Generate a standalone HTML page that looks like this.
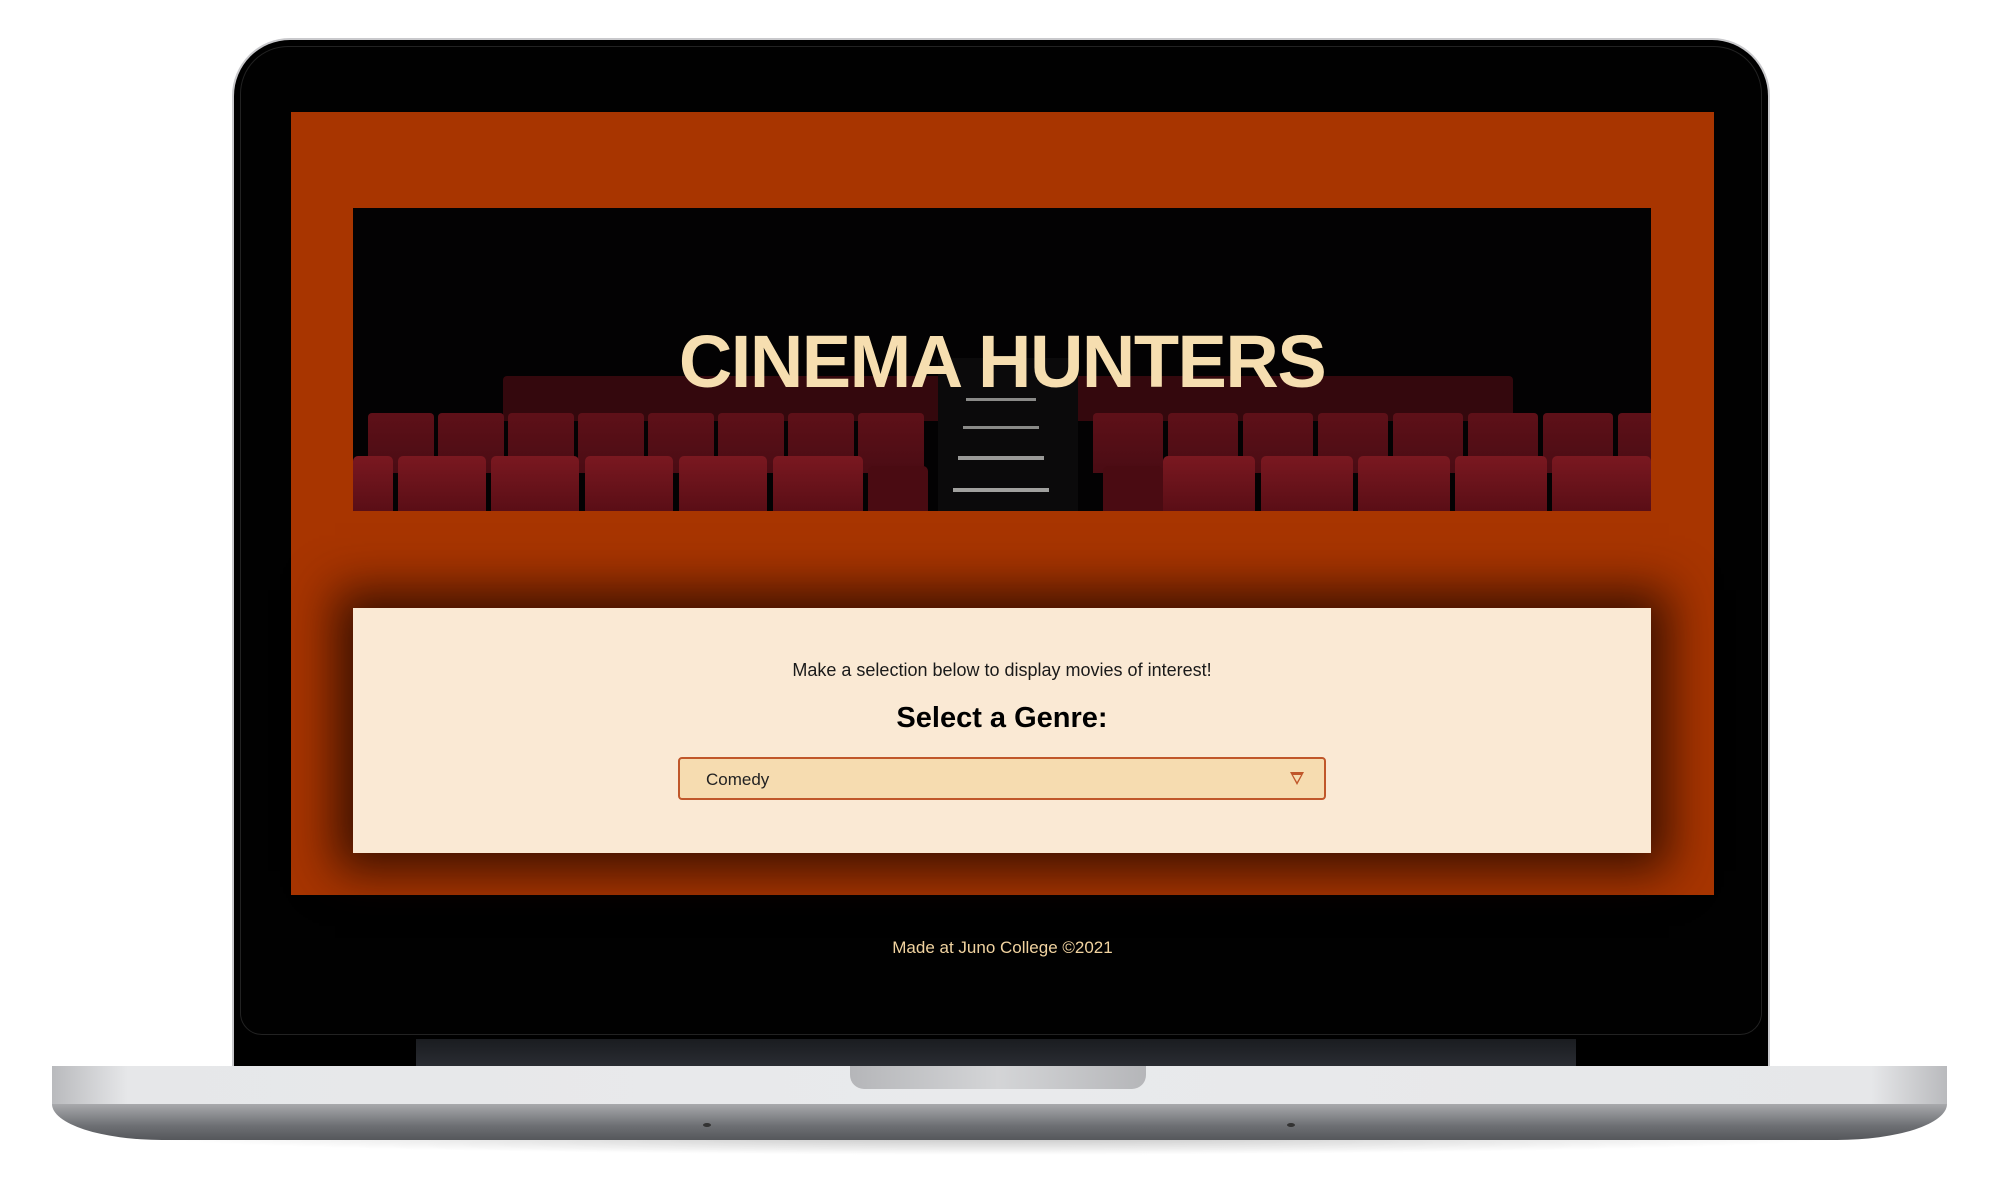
<!DOCTYPE html>
<html><head><meta charset="utf-8"><style>
*{margin:0;padding:0;box-sizing:border-box}
body{width:1999px;height:1181px;background:#fff;position:relative;overflow:hidden;font-family:"Liberation Sans",sans-serif}
.abs{position:absolute}
#lid{left:232px;top:38px;width:1538px;height:1030px;background:#000;border-radius:58px 58px 0 0;border:2px solid #c9c9cc;border-bottom:none}
#inner{left:240px;top:46px;width:1522px;height:989px;background:#010101;border-radius:48px 48px 22px 22px;border:1px solid #222}
#screen{left:291px;top:112px;width:1423px;height:783px;background:#a83500}
#banner{left:353px;top:208px;width:1298px;height:303px;background:#030203;overflow:hidden}
.seat{position:absolute;background:linear-gradient(#7a1820,#5a0e16);border-radius:5px 5px 0 0}
.s2{position:absolute;background:linear-gradient(#5e1018,#4a0c14);border-radius:4px 4px 0 0}
#title{left:353px;top:320px;width:1298px;text-align:center;font-weight:bold;font-size:74px;color:#f6deb0;letter-spacing:-1.5px;line-height:84px}
#card{left:353px;top:608px;width:1298px;height:245px;background:#fae9d4;box-shadow:0 0 45px 18px rgba(40,10,0,.85)}
#t1{left:353px;top:660px;width:1298px;text-align:center;font-size:18px;color:#1a1a1a}
#t2{left:353px;top:702px;width:1298px;text-align:center;font-size:29px;font-weight:bold;color:#000}
#sel{left:678px;top:757px;width:648px;height:43px;background:#f6dcb0;border:2px solid #c0572a;border-radius:4px;font-size:17px;padding:11px 0 0 26px;color:#222}
#arrow{left:1290px;top:772px;width:0;height:0;border-left:7px solid transparent;border-right:7px solid transparent;border-top:13px solid #c0572a}
#arrow2{left:1293px;top:775px;width:0;height:0;border-left:4px solid transparent;border-right:4px solid transparent;border-top:7px solid #f6dcb0}
#foot{left:291px;top:938px;width:1423px;text-align:center;font-size:17px;color:#f1d3a0}
#hinge{left:416px;top:1039px;width:1160px;height:28px;background:linear-gradient(#1a1c20,#2a2d33)}
#base{left:52px;top:1066px;width:1895px;height:38px;background:linear-gradient(90deg,#b9babd,#e6e7e9 4%,#e9eaec 50%,#e6e7e9 96%,#b9babd)}
#base2{left:52px;top:1104px;width:1895px;height:36px;background:linear-gradient(#a8a9ac,#6e7074 60%,#55575b);border-radius:0 0 110px 110px/0 0 36px 36px}
#notch{left:850px;top:1066px;width:296px;height:23px;background:linear-gradient(90deg,#b5b6b9,#d4d5d7 50%,#b5b6b9);border-radius:0 0 14px 14px}
#shadow{left:120px;top:1135px;width:1760px;height:20px;background:radial-gradient(ellipse at center top,rgba(0,0,0,.25),rgba(0,0,0,0) 70%)}
</style></head><body>
<div class="abs" id="shadow"></div>
<div class="abs" id="lid"></div>
<div class="abs" id="inner"></div>
<div class="abs" id="screen"></div>
<div class="abs" id="banner">
 <!-- back row -->
 <div class="s2" style="left:150px;top:168px;width:440px;height:45px;background:#34080d"></div>
 <div class="s2" style="left:720px;top:168px;width:440px;height:45px;background:#34080d"></div>
 <!-- middle row -->
 <div class="s2" style="left:15px;top:205px;width:66px;height:60px"></div>
 <div class="s2" style="left:85px;top:205px;width:66px;height:60px"></div>
 <div class="s2" style="left:155px;top:205px;width:66px;height:60px"></div>
 <div class="s2" style="left:225px;top:205px;width:66px;height:60px"></div>
 <div class="s2" style="left:295px;top:205px;width:66px;height:60px"></div>
 <div class="s2" style="left:365px;top:205px;width:66px;height:60px"></div>
 <div class="s2" style="left:435px;top:205px;width:66px;height:60px"></div>
 <div class="s2" style="left:505px;top:205px;width:66px;height:60px"></div>
 <div class="s2" style="left:740px;top:205px;width:70px;height:60px"></div>
 <div class="s2" style="left:815px;top:205px;width:70px;height:60px"></div>
 <div class="s2" style="left:890px;top:205px;width:70px;height:60px"></div>
 <div class="s2" style="left:965px;top:205px;width:70px;height:60px"></div>
 <div class="s2" style="left:1040px;top:205px;width:70px;height:60px"></div>
 <div class="s2" style="left:1115px;top:205px;width:70px;height:60px"></div>
 <div class="s2" style="left:1190px;top:205px;width:70px;height:60px"></div>
 <div class="s2" style="left:1265px;top:205px;width:40px;height:60px"></div>
 <!-- front row -->
 <div class="seat" style="left:0;top:248px;width:40px;height:55px"></div>
 <div class="seat" style="left:45px;top:248px;width:88px;height:55px"></div>
 <div class="seat" style="left:138px;top:248px;width:88px;height:55px"></div>
 <div class="seat" style="left:232px;top:248px;width:88px;height:55px"></div>
 <div class="seat" style="left:326px;top:248px;width:88px;height:55px"></div>
 <div class="seat" style="left:420px;top:248px;width:90px;height:55px"></div>
 <div class="seat" style="left:515px;top:258px;width:60px;height:45px;background:#4a0b12"></div>
 <div class="seat" style="left:750px;top:258px;width:60px;height:45px;background:#4a0b12"></div>
 <div class="seat" style="left:810px;top:248px;width:92px;height:55px"></div>
 <div class="seat" style="left:908px;top:248px;width:92px;height:55px"></div>
 <div class="seat" style="left:1005px;top:248px;width:92px;height:55px"></div>
 <div class="seat" style="left:1102px;top:248px;width:92px;height:55px"></div>
 <div class="seat" style="left:1199px;top:248px;width:99px;height:55px"></div>
 <!-- stairs -->
 <div class="abs" style="left:585px;top:150px;width:140px;height:153px;background:#0b0a0b"></div>
 <div class="abs" style="left:613px;top:190px;width:70px;height:3px;background:#8a8a88"></div>
 <div class="abs" style="left:610px;top:218px;width:76px;height:3px;background:#8a8a88"></div>
 <div class="abs" style="left:605px;top:248px;width:86px;height:4px;background:#9a9a98"></div>
 <div class="abs" style="left:600px;top:280px;width:96px;height:4px;background:#a0a09e"></div>
</div>
<div class="abs" id="title">CINEMA HUNTERS</div>
<div class="abs" id="card"></div>
<div class="abs" id="t1">Make a selection below to display movies of interest!</div>
<div class="abs" id="t2">Select a Genre:</div>
<div class="abs" id="sel">Comedy</div>
<div class="abs" id="arrow"></div>
<div class="abs" id="arrow2"></div>
<div class="abs" id="foot">Made at Juno College ©2021</div>
<div class="abs" id="hinge"></div>
<div class="abs" id="base"></div>
<div class="abs" id="base2"></div>
<div class="abs" id="notch"></div>
<div class="abs" style="left:703px;top:1123px;width:8px;height:4px;border-radius:50%;background:#333"></div>
<div class="abs" style="left:1287px;top:1123px;width:8px;height:4px;border-radius:50%;background:#333"></div>
</body></html>
